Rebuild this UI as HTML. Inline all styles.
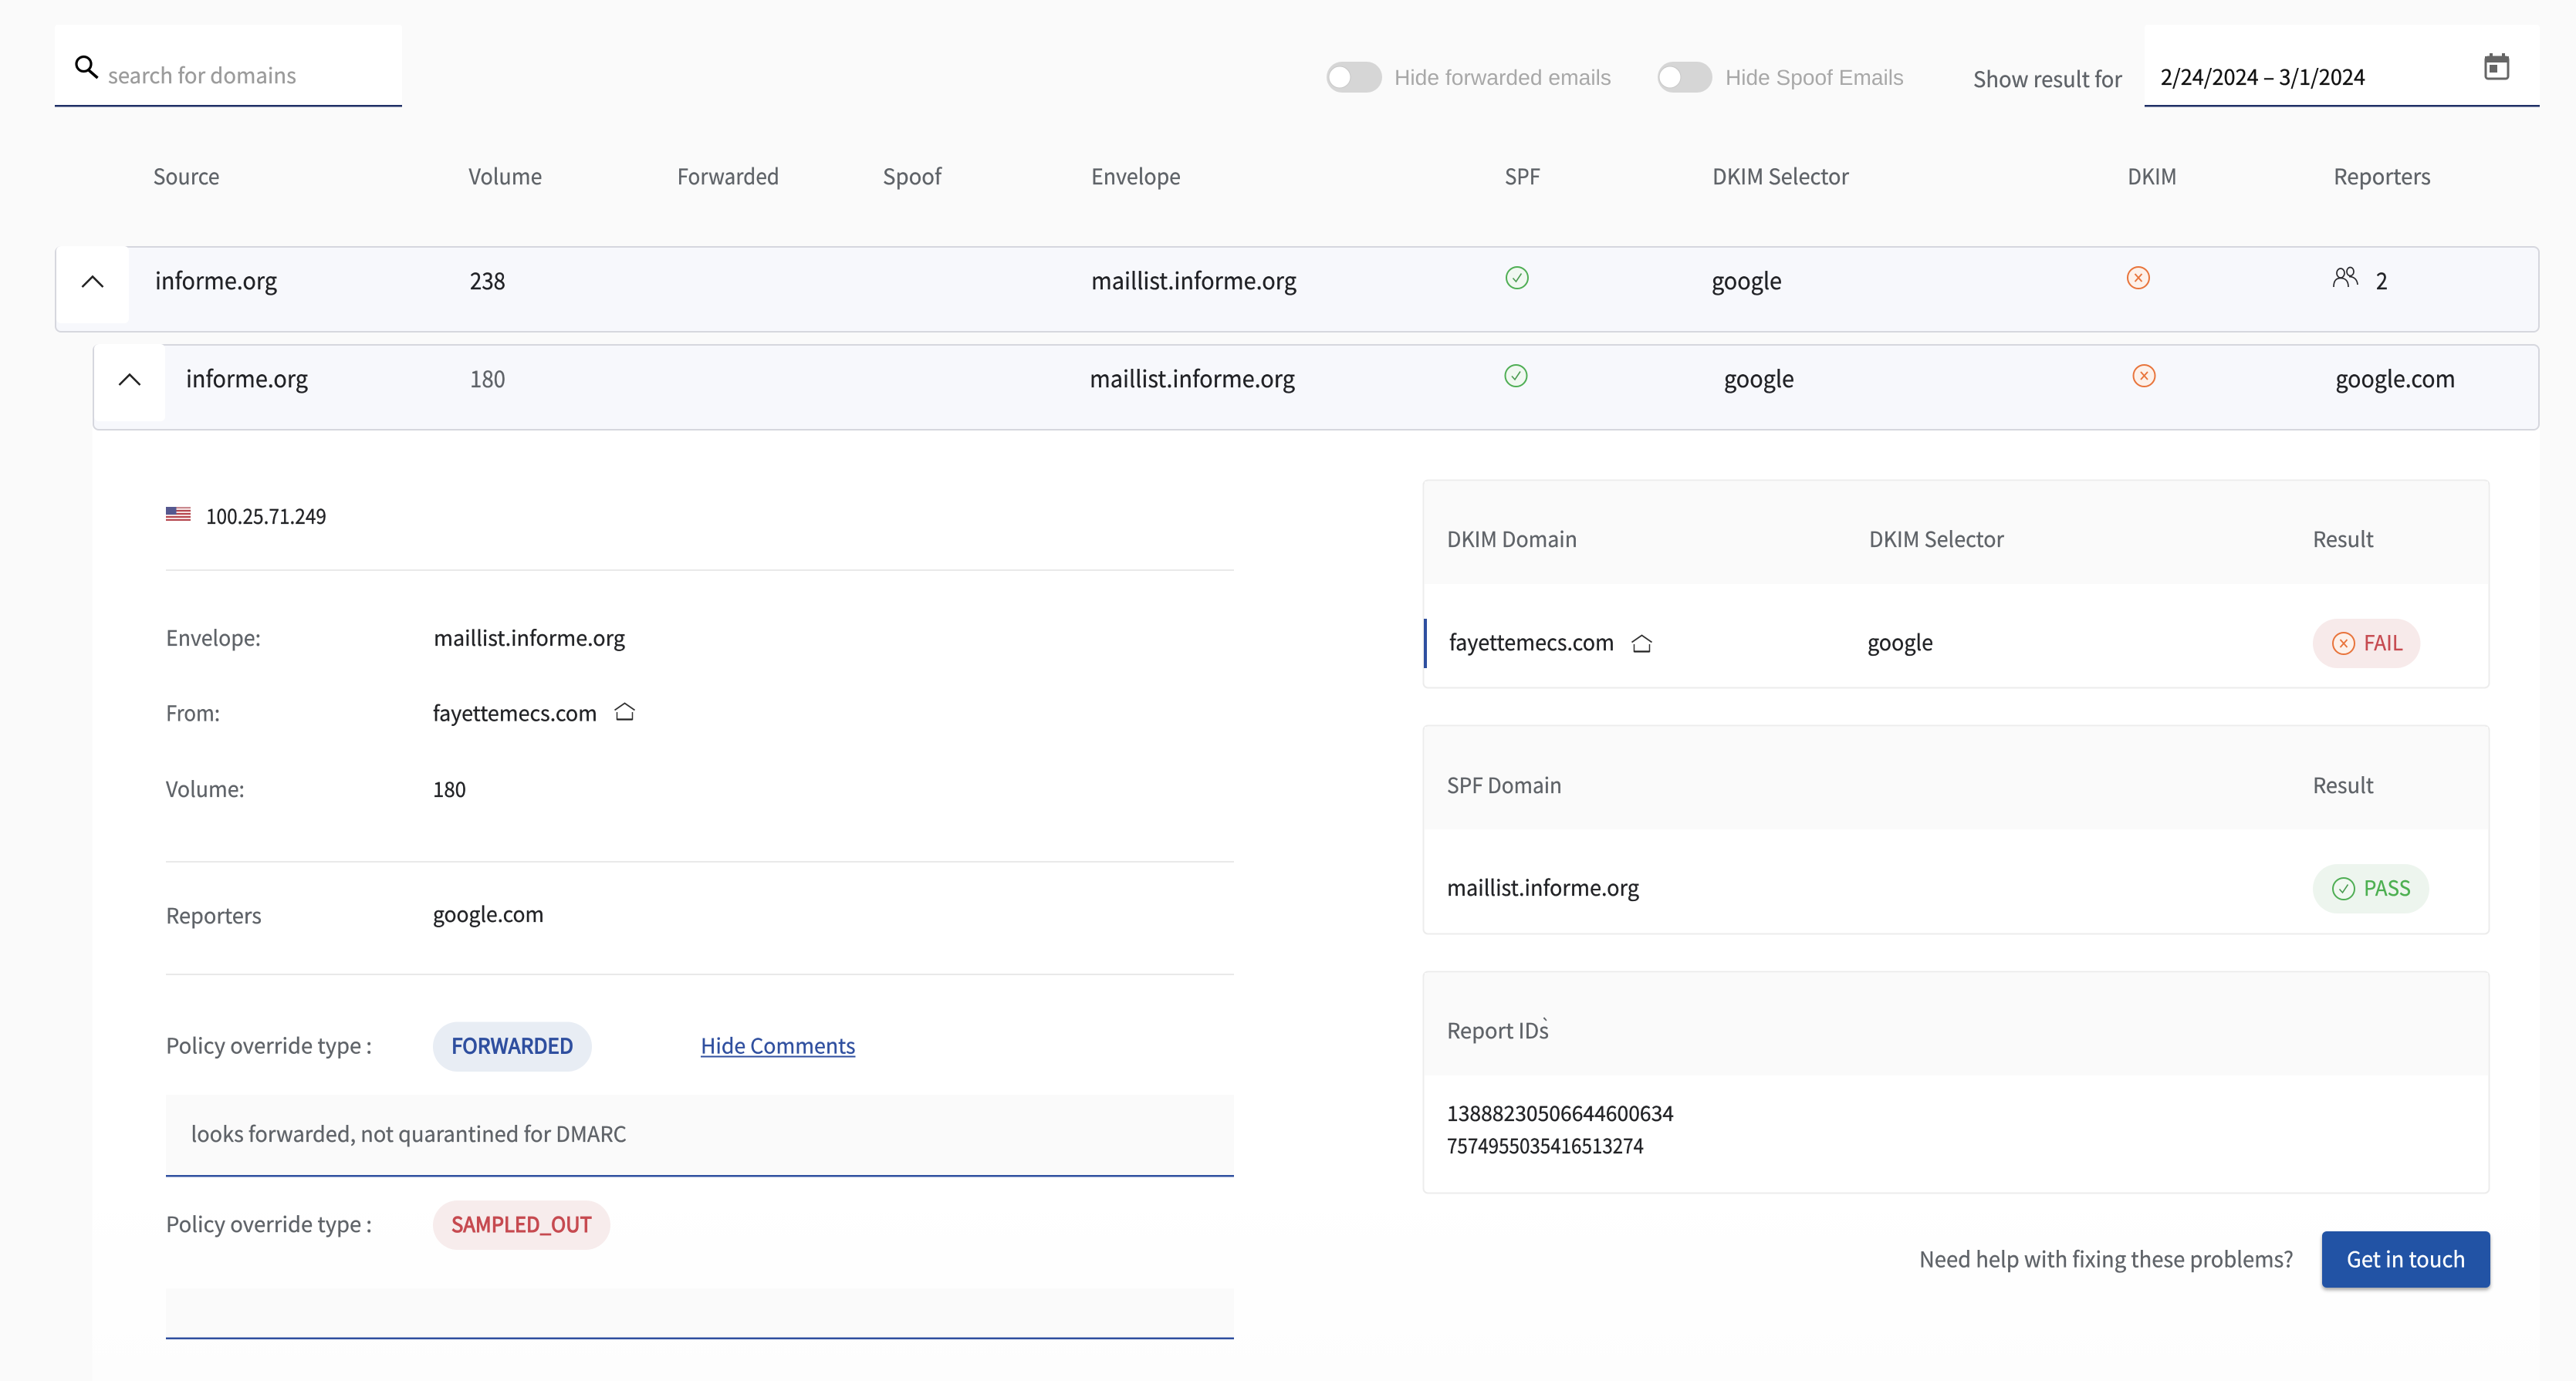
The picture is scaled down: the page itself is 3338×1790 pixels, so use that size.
<!DOCTYPE html>
<html lang="en">
<head>
<meta charset="utf-8">
<title>DMARC report</title>
<style>
html,body{margin:0;padding:0;background:#fafafa;width:3338px;height:1790px;overflow:hidden}
svg{display:block}
text{font-family:"Noto Sans CJK JP","Liberation Sans",sans-serif;text-rendering:geometricPrecision;font-size:27px;color:#222326;fill:currentColor;stroke:currentColor;stroke-width:.3px}
.h{font-size:28px;color:#5f6368}
.r{font-size:30px;color:#212226}
.l{font-size:27.5px;color:#5f6368}
.v{font-size:27px;color:#222326}
.c{font-size:27.5px;color:#5f6368}
.t{font-family:"Liberation Sans",sans-serif;font-size:28px;color:#a8a8a8;stroke-width:0}
.b{stroke-width:1.1px}
</style>
</head>
<body>
<svg width="3338" height="1790" viewBox="0 0 3338 1790" xmlns="http://www.w3.org/2000/svg">
<defs>
<linearGradient id="pg" x1="0" y1="0" x2="0" y2="1"><stop offset="0.8" stop-color="#ffffff"/><stop offset="1" stop-color="#fdfdfd"/></linearGradient>
<filter id="bs" x="-10%" y="-10%" width="120%" height="130%"><feDropShadow dx="0" dy="3" stdDeviation="2.5" flood-color="#000" flood-opacity="0.35"/></filter>
<g id="ok"><circle r="14" fill="#f1f8f1" stroke="#4fae54" stroke-width="2"/><path d="M-5.5 0.5 L-1.5 5 L5.5 -5.5" fill="none" stroke="#4a9a50" stroke-width="1.6"/></g>
<g id="no"><circle r="14" fill="#fdf1ea" stroke="#e8743b" stroke-width="2"/><path d="M-4.5 -5 L4.5 5 M4.5 -5 L-4.5 5" fill="none" stroke="#e8743b" stroke-width="1.9"/></g>
<g id="home"><path d="M0.500 9.500 L13.500 0.500 L26.500 9.500" fill="none" stroke="#333" stroke-width="1.800"/><path d="M3.500 12 V21.500 H23.500 V12" fill="none" stroke="#333" stroke-width="1.500"/><path d="M3.500 21.500 H23.500" fill="none" stroke="#222" stroke-width="2.200"/></g>
</defs>
<rect width="3338" height="1790" fill="#fafafa"/>

<!-- search -->
<path d="M71 138 V36 a4 4 0 0 1 4 -4 H517 a4 4 0 0 1 4 4 V138 Z" fill="#fff"/>
<rect x="71" y="136" width="450" height="2.500" fill="#1f2f66"/>
<circle cx="108.500" cy="83" r="9.500" fill="none" stroke="#000" stroke-width="3.200"/>
<path d="M115 91 L126.500 101" stroke="#000" stroke-width="3.600" fill="none"/>
<text x="140" y="108" textLength="244" lengthAdjust="spacingAndGlyphs" style="font-size:27.5px;color:#9b9b9b">search for domains</text>

<!-- toggles -->
<rect x="1719" y="80" width="72" height="40" rx="20" fill="#d6d6d6"/>
<circle cx="1736" cy="100" r="14" fill="#fff" stroke="#c8c8c8" stroke-width="1"/>
<text class="t" x="1807" y="110" textLength="281" lengthAdjust="spacingAndGlyphs">Hide forwarded emails</text>
<rect x="2148" y="80" width="71" height="40" rx="20" fill="#d6d6d6"/>
<circle cx="2164" cy="100" r="14" fill="#fff" stroke="#c8c8c8" stroke-width="1"/>
<text class="t" x="2236" y="110" textLength="231" lengthAdjust="spacingAndGlyphs">Hide Spoof Emails</text>
<text class="h" x="2557" y="113" textLength="193" lengthAdjust="spacingAndGlyphs">Show result for</text>

<!-- date -->
<path d="M2779 138 V36 a4 4 0 0 1 4 -4 H3287 a4 4 0 0 1 4 4 V138 Z" fill="#fff"/>
<rect x="2779" y="136" width="512" height="2.500" fill="#1f2f66"/>
<text x="2800" y="110" textLength="265" lengthAdjust="spacingAndGlyphs" style="font-size:27.5px;color:#111">2/24/2024 – 3/1/2024</text>
<rect x="3221" y="74" width="29" height="28" rx="3" fill="#fff" stroke="#666" stroke-width="3"/>
<rect x="3220" y="73" width="31" height="8" fill="#666"/>
<rect x="3226" y="69" width="4" height="6" fill="#666"/>
<rect x="3242" y="69" width="4" height="6" fill="#666"/>
<rect x="3226" y="84" width="10" height="10" fill="#666"/>

<!-- table header -->
<text class="h" x="198.500" y="239" textLength="86" lengthAdjust="spacingAndGlyphs">Source</text>
<text class="h" x="607.500" y="239" textLength="95" lengthAdjust="spacingAndGlyphs">Volume</text>
<text class="h" x="877.500" y="239" textLength="132.500" lengthAdjust="spacingAndGlyphs">Forwarded</text>
<text class="h" x="1144" y="239" textLength="76" lengthAdjust="spacingAndGlyphs">Spoof</text>
<text class="h" x="1414" y="239" textLength="116" lengthAdjust="spacingAndGlyphs">Envelope</text>
<text class="h" x="1950" y="239" textLength="46" lengthAdjust="spacingAndGlyphs">SPF</text>
<text class="h" x="2219" y="239" textLength="177" lengthAdjust="spacingAndGlyphs">DKIM Selector</text>
<text class="h" x="2757" y="239" textLength="64" lengthAdjust="spacingAndGlyphs">DKIM</text>
<text class="h" x="3024" y="239" textLength="126" lengthAdjust="spacingAndGlyphs">Reporters</text>

<!-- panel -->
<rect x="119.500" y="540" width="3171.500" height="1250" fill="url(#pg)"/>

<!-- row 1 -->
<rect x="72" y="320" width="3218" height="110" rx="7" fill="#f7f8fc" stroke="#d6d7de" stroke-width="2"/>
<rect x="73" y="319" width="94" height="100" rx="6" fill="#fff"/>
<path d="M106.500 372 L120 358.500 L133.500 372" fill="none" stroke="#222" stroke-width="2.600"/>
<text class="r" x="201" y="375" textLength="158" lengthAdjust="spacingAndGlyphs">informe.org</text>
<text class="r" x="609" y="375" textLength="46" lengthAdjust="spacingAndGlyphs">238</text>
<text class="r" x="1414" y="375" textLength="266" lengthAdjust="spacingAndGlyphs">maillist.informe.org</text>
<use href="#ok" x="1966" y="360"/>
<text class="r" x="2218" y="375" textLength="91" lengthAdjust="spacingAndGlyphs">google</text>
<use href="#no" x="2771" y="360"/>
<g fill="none" stroke="#2a2a2e" stroke-width="1.700">
<ellipse cx="3033" cy="354" rx="5" ry="6"/>
<path d="M3024 372 C3024 364 3027 360.500 3033 360.500 C3039 360.500 3043 364 3043 372"/>
<ellipse cx="3045.500" cy="352" rx="4.500" ry="5.500"/>
<path d="M3044 358.500 C3050 358.500 3054.500 362 3055 369"/>
</g>
<text class="r" x="3079" y="375" textLength="15" lengthAdjust="spacingAndGlyphs">2</text>

<!-- row 2 -->
<rect x="121" y="447" width="3169" height="110" rx="7" fill="#f7f8fc" stroke="#d6d7de" stroke-width="2"/>
<rect x="122" y="446" width="92" height="100" rx="6" fill="#fff"/>
<path d="M154.500 499 L168 485.500 L181.500 499" fill="none" stroke="#222" stroke-width="2.600"/>
<text class="r" x="241" y="502" textLength="158" lengthAdjust="spacingAndGlyphs">informe.org</text>
<text class="r" x="609" y="502" textLength="46" lengthAdjust="spacingAndGlyphs" style="color:#5f6368">180</text>
<text class="r" x="1412" y="502" textLength="266" lengthAdjust="spacingAndGlyphs">maillist.informe.org</text>
<use href="#ok" x="1964.500" y="487"/>
<text class="r" x="2234" y="502" textLength="91" lengthAdjust="spacingAndGlyphs">google</text>
<use href="#no" x="2778.500" y="487"/>
<text class="r" x="3026.500" y="502" textLength="155.500" lengthAdjust="spacingAndGlyphs">google.com</text>

<!-- left details -->
<g>
<rect x="215" y="657" width="32" height="18" fill="#f3dede"/>
<rect x="215" y="657" width="32" height="2" fill="#c98a8f"/>
<rect x="215" y="661" width="32" height="2" fill="#b5474f"/>
<rect x="215" y="665" width="32" height="2" fill="#b5474f"/>
<rect x="215" y="669" width="32" height="2" fill="#b5474f"/>
<rect x="215" y="673" width="32" height="2" fill="#b5474f"/>
<rect x="215" y="657" width="13.500" height="10" fill="#55588f"/>
</g>
<text class="v" x="267" y="679" textLength="156" lengthAdjust="spacingAndGlyphs">100.25.71.249</text>
<rect x="215" y="738" width="1384" height="2" fill="#e9e9e9"/>

<text class="l" x="215" y="837" textLength="123" lengthAdjust="spacingAndGlyphs">Envelope:</text>
<text class="v" x="562" y="837" textLength="248" lengthAdjust="spacingAndGlyphs">maillist.informe.org</text>
<text class="l" x="215" y="934.500" textLength="70" lengthAdjust="spacingAndGlyphs">From:</text>
<text class="v" x="561" y="934.500" textLength="213" lengthAdjust="spacingAndGlyphs">fayettemecs.com</text>
<use href="#home" x="796" y="911"/>
<text class="l" x="215" y="1033" textLength="102" lengthAdjust="spacingAndGlyphs">Volume:</text>
<text class="v" x="561" y="1033" textLength="43" lengthAdjust="spacingAndGlyphs">180</text>
<rect x="215" y="1116" width="1384" height="2" fill="#e9e9e9"/>

<text class="l" x="215" y="1197" textLength="124" lengthAdjust="spacingAndGlyphs">Reporters</text>
<text class="v" x="561" y="1195" textLength="144" lengthAdjust="spacingAndGlyphs">google.com</text>
<rect x="215" y="1262" width="1384" height="2" fill="#e9e9e9"/>

<text class="l" x="215" y="1365.500" textLength="267" lengthAdjust="spacingAndGlyphs">Policy override type :</text>
<rect x="561" y="1324.500" width="206" height="64.500" rx="32" fill="#e8edf4"/>
<text class="v b" x="585" y="1365.500" textLength="158" lengthAdjust="spacingAndGlyphs" style="color:#2f4f9f">FORWARDED</text>
<text class="v" x="908" y="1365.500" textLength="200.500" lengthAdjust="spacingAndGlyphs" style="color:#2f4f9f">Hide Comments</text>
<rect x="908" y="1368.500" width="200.500" height="2" fill="#2f4f9f"/>

<rect x="215" y="1419" width="1384" height="106" fill="#fafafa"/>
<rect x="215" y="1523" width="1384" height="2.500" fill="#2f4f9f"/>
<text class="l" x="247.500" y="1480" textLength="564.500" lengthAdjust="spacingAndGlyphs">looks forwarded, not quarantined for DMARC</text>

<text class="l" x="215" y="1597" textLength="267" lengthAdjust="spacingAndGlyphs">Policy override type :</text>
<rect x="561" y="1556" width="230" height="64" rx="32" fill="#f7ecec"/>
<text class="v b" x="585" y="1597" textLength="182" lengthAdjust="spacingAndGlyphs" style="color:#c64a50">SAMPLED_OUT</text>

<rect x="215" y="1670" width="1384" height="66" fill="#fafafa"/>
<rect x="215" y="1733.500" width="1384" height="2.500" fill="#2f4f9f"/>

<!-- card 1 -->
<rect x="1844.500" y="622.500" width="1381" height="269" rx="6" fill="#fff" stroke="#ececec" stroke-width="2"/>
<path d="M1846 757 V624 H3224 V757 Z" fill="#fafafa"/>
<text class="c" x="1875" y="709" textLength="169" lengthAdjust="spacingAndGlyphs">DKIM Domain</text>
<text class="c" x="2422" y="709" textLength="175" lengthAdjust="spacingAndGlyphs">DKIM Selector</text>
<text class="c" x="2997" y="709" textLength="79" lengthAdjust="spacingAndGlyphs">Result</text>
<rect x="1845" y="802" width="4" height="64" fill="#2f4f9f"/>
<text class="v" x="1878" y="843" textLength="214" lengthAdjust="spacingAndGlyphs" style="font-size:28px">fayettemecs.com</text>
<use href="#home" x="2114" y="823"/>
<text class="v" x="2420" y="843" textLength="85" lengthAdjust="spacingAndGlyphs" style="font-size:28px">google</text>
<rect x="2997" y="802" width="139.500" height="64" rx="32" fill="#f7eaea"/>
<use href="#no" x="3037" y="834"/>
<text class="v" x="3063" y="843" textLength="51" lengthAdjust="spacingAndGlyphs" style="color:#c64a50">FAIL</text>

<!-- card 2 -->
<rect x="1844.500" y="940.500" width="1381" height="270" rx="6" fill="#fff" stroke="#ececec" stroke-width="2"/>
<path d="M1846 1075 V942 H3224 V1075 Z" fill="#fafafa"/>
<text class="c" x="1875" y="1028" textLength="149" lengthAdjust="spacingAndGlyphs">SPF Domain</text>
<text class="c" x="2997" y="1028" textLength="79" lengthAdjust="spacingAndGlyphs">Result</text>
<text class="v" x="1875" y="1161" textLength="249" lengthAdjust="spacingAndGlyphs" style="font-size:28px">maillist.informe.org</text>
<rect x="2997" y="1120" width="151" height="64" rx="32" fill="#edf5ee"/>
<use href="#ok" x="3037" y="1152"/>
<text class="v" x="3063" y="1161" textLength="61" lengthAdjust="spacingAndGlyphs" style="color:#4caf50">PASS</text>

<!-- card 3 -->
<rect x="1844.500" y="1259.500" width="1381" height="287" rx="6" fill="#fff" stroke="#ececec" stroke-width="2"/>
<path d="M1846 1394 V1261 H3224 V1394 Z" fill="#fafafa"/>
<text class="c" x="1875" y="1346" textLength="132" lengthAdjust="spacingAndGlyphs">Report IDs</text>
<text x="1997" y="1336" style="font-size:20px;color:#5f6368">`</text>
<text class="v" x="1875" y="1453" textLength="294" lengthAdjust="spacingAndGlyphs">13888230506644600634</text>
<text class="v" x="1875" y="1495" textLength="255" lengthAdjust="spacingAndGlyphs">7574955035416513274</text>

<!-- help -->
<text class="l" x="2487" y="1642.500" textLength="485" lengthAdjust="spacingAndGlyphs" style="font-size:28px">Need help with fixing these problems?</text>
<rect x="3009" y="1596" width="218" height="73" rx="6" fill="#2253a5" filter="url(#bs)"/>
<text x="3041" y="1642.500" textLength="154" lengthAdjust="spacingAndGlyphs" style="font-size:28px;color:#fff">Get in touch</text>
</svg>
</body>
</html>
